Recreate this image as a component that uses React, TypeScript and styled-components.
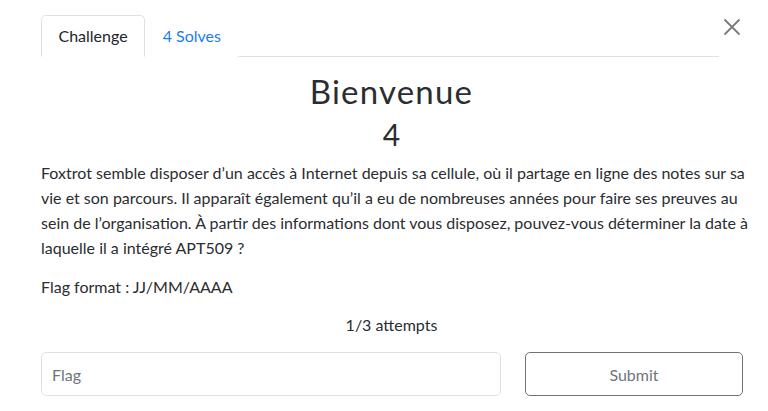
import React from "react";
import styled, { createGlobalStyle } from "styled-components";

const Global = createGlobalStyle`
  html, body { margin: 0; padding: 0; background: #ffffff; }
  body { font-family: Lato, "Open Sans", sans-serif; color: #212529; }
  * { box-sizing: border-box; }
`;

const Page = styled.div`
  width: 768px;
  height: 411px;
  padding: 15px 0 0 41px;
  overflow: hidden;
`;

const Column = styled.div`
  width: 701px;
  display: flex;
  flex-direction: column;
`;

const Header = styled.div`
  display: flex;
  align-items: flex-start;
  width: 701px;
`;

const Tabs = styled.ul`
  list-style: none;
  margin: 0;
  padding: 0;
  display: flex;
  width: 678px;
  border-bottom: 1px solid #dee2e6;
`;

const Tab = styled.li<{ $active?: boolean }>`
  margin-bottom: -1px;
  padding: 8px 16.5px;
  font-size: 16px;
  line-height: 24px;
  border: 1px solid ${(p) => (p.$active ? "#dee2e6" : "transparent")};
  border-bottom-color: ${(p) => (p.$active ? "#ffffff" : "transparent")};
  border-radius: 5px 5px 0 0;
  color: ${(p) => (p.$active ? "#212529" : "#1e7bf3")};
  background: #ffffff;
  cursor: pointer;
`;

const CloseButton = styled.button`
  margin: 3px 0 0 4px;
  width: 18px;
  height: 18px;
  padding: 0;
  border: 0;
  background: transparent;
  display: flex;
  align-items: center;
  justify-content: center;
  cursor: pointer;
`;

const Title = styled.h2`
  margin: 16px 0 0;
  font-size: 33px;
  font-weight: 400;
  line-height: 36px;
  letter-spacing: 1.2px;
  text-align: center;
  color: #2a2d31;
`;

const Value = styled.h3`
  margin: 7px 0 0;
  font-size: 30px;
  font-weight: 400;
  line-height: 36px;
  text-align: center;
  color: #2a2d31;
`;

const Description = styled.p`
  margin: 8px -20px 0 0;
  font-size: 16px;
  line-height: 25px;
  color: #2a2d31;
`;

const Format = styled.p`
  margin: 14px 0 0;
  font-size: 16px;
  line-height: 25px;
  color: #2a2d31;
`;

const Attempts = styled.p`
  margin: 13px 0 0;
  font-size: 16px;
  line-height: 25px;
  text-align: center;
  color: #2a2d31;
`;

const FormRow = styled.form`
  margin-top: 15px;
  display: grid;
  grid-template-columns: 460px 218px;
  column-gap: 24px;
`;

const FlagInput = styled.input`
  height: 44px;
  padding: 0 10px;
  font-family: Lato, sans-serif;
  font-size: 16px;
  color: #495057;
  border: 1px solid #dee2e6;
  border-radius: 5px;
  outline: none;
  &::placeholder { color: #6c757d; }
`;

const SubmitButton = styled.button`
  height: 44px;
  font-family: Lato, sans-serif;
  font-size: 16px;
  color: #6c757d;
  background: #ffffff;
  border: 1px solid #6c757d;
  border-radius: 5px;
  cursor: pointer;
`;

export default function App() {
  return (
    <>
      <Global />
      <Page>
        <Column>
          <Header>
            <Tabs>
              <Tab $active>Challenge</Tab>
              <Tab>4 Solves</Tab>
            </Tabs>
            <CloseButton aria-label="Close">
              <svg width="18" height="18" viewBox="0 0 18 18">
                <path d="M1.5 1.5 L16.5 16.5 M16.5 1.5 L1.5 16.5" stroke="#7b7b7b" strokeWidth="1.8" fill="none" />
              </svg>
            </CloseButton>
          </Header>
          <Title>Bienvenue</Title>
          <Value>4</Value>
          <Description>
            Foxtrot semble disposer d’un accès à Internet depuis sa cellule, où il partage en ligne des notes sur sa
            vie et son parcours. Il apparaît également qu’il a eu de nombreuses années pour faire ses preuves au
            sein de l’organisation. À partir des informations dont vous disposez, pouvez-vous déterminer la date à
            laquelle il a intégré APT509&nbsp;?
          </Description>
          <Format>Flag format : JJ/MM/AAAA</Format>
          <Attempts>1/3 attempts</Attempts>
          <FormRow onSubmit={(e) => e.preventDefault()}>
            <FlagInput placeholder="Flag" />
            <SubmitButton type="submit">Submit</SubmitButton>
          </FormRow>
        </Column>
      </Page>
    </>
  );
}
